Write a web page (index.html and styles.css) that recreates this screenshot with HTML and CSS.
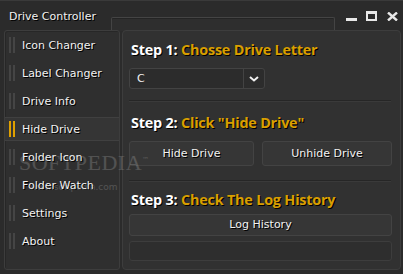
FILE: index.html
```html
<!DOCTYPE html>
<html>
<head>
    <meta name="viewport" content="width=device-width, initial-scale=1">
    <link rel="stylesheet" href="styles.css">
</head>
<body>
    <div class="window">
        <div class="titlebar">
            <span class="title">Drive Controller</span>
            <div class="title-tab"></div>
            <div class="controls">
                <span class="btn-min"></span>
                <span class="btn-max"></span>
                <svg class="btn-close" width="11" height="9" viewBox="0 0 11 9">
                    <path d="M1 0.5 L10 8.5 M10 0.5 L1 8.5" stroke="#e8e8e8" stroke-width="2.4"/>
                </svg>
            </div>
        </div>

        <div class="main">
            <div class="sidebar">
                <div class="item"><span class="bars"></span>Icon Changer</div>
                <div class="item"><span class="bars"></span>Label Changer</div>
                <div class="item"><span class="bars"></span>Drive Info</div>
                <div class="item active"><span class="bars"></span>Hide Drive</div>
                <div class="item"><span class="bars"></span>Folder Icon</div>
                <div class="item"><span class="bars"></span>Folder Watch</div>
                <div class="item"><span class="bars"></span>Settings</div>
                <div class="item"><span class="bars"></span>About</div>
            </div>

            <div class="content">
                <h3 class="step"><span class="num">Step 1:</span> Chosse Drive Letter</h3>
                <div class="select">
                    <span class="value">C</span>
                    <span class="arrow">
                        <svg width="10" height="6" viewBox="0 0 10 6">
                            <path d="M1 1 L5 4.5 L9 1" fill="none" stroke="#f0f0f0" stroke-width="2"/>
                        </svg>
                    </span>
                </div>
                <div class="sep"></div>

                <h3 class="step"><span class="num">Step 2:</span> Click "Hide Drive"</h3>
                <div class="btn-row">
                    <div class="button hide">Hide Drive</div>
                    <div class="button">Unhide Drive</div>
                </div>
                <div class="sep lower"></div>

                <h3 class="step"><span class="num">Step 3:</span> Check The Log History</h3>
                <div class="button wide">Log History</div>
                <div class="log-box"></div>
            </div>
        </div>

        <div class="watermark">
            <span class="wm-big">SOFTPEDIA<sup>™</sup></span>
            <span class="wm-small">www.softpedia.com</span>
        </div>
    </div>
</body>
</html>
```

FILE: styles.css
```css
body {
    margin: 0;
    padding: 0;
    background-color: #2b2b2b;
    font-family: "DejaVu Sans", Verdana, sans-serif;
    font-size: 11px;
    color: #f2f2f2;
}

.window {
    position: relative;
    width: 403px;
    height: 274px;
    box-sizing: border-box;
    border-top: 1px solid #3a3a3a;
    overflow: hidden;
}

/* Title bar */
.titlebar {
    height: 29px;
    display: flex;
    align-items: flex-start;
    padding: 0 5px 0 9px;
}

.title {
    margin-top: 9px;
    width: 102px;
    text-shadow: 1px 1px 0 #000;
}

.title-tab {
    margin-top: 16px;
    width: 222px;
    height: 13px;
    border: 1px solid #444;
    border-bottom: none;
    border-radius: 2px 2px 0 0;
    background-color: #2e2e2e;
    box-shadow: inset 0 1px 0 #242424;
}

.controls {
    margin-left: auto;
    margin-top: 10px;
    display: flex;
    align-items: flex-end;
    gap: 9px;
    height: 10px;
}

.btn-min {
    width: 11px;
    height: 3px;
    background-color: #e8e8e8;
}

.btn-max {
    width: 7px;
    height: 5px;
    border: 2px solid #e8e8e8;
    border-top-width: 3px;
}

.btn-close {
    display: block;
    margin-left: 1px;
}

/* Layout */
.main {
    display: flex;
    gap: 2px;
    padding: 0 2px 0 4px;
    height: 240px;
}

.sidebar {
    width: 114px;
    border: 1px solid #3d3d3d;
    border-radius: 3px;
    background-color: #2f2f2f;
    box-shadow: inset 1px 1px 0 #272727;
}

.item {
    height: 28px;
    display: flex;
    align-items: center;
    padding-left: 4px;
    text-shadow: 1px 1px 0 #000;
}

.bars {
    width: 6px;
    height: 16px;
    margin-right: 7px;
    border-left: 2px solid #454545;
    border-right: 2px solid #454545;
    box-sizing: border-box;
}

.item.active {
    height: 22px;
    margin: 2px 0;
    background-color: #353535;
    border-top: 1px solid #404040;
    border-bottom: 1px solid #404040;
}

.item.active .bars {
    border-color: #dfa000;
}

.content {
    flex: 1;
    border: 1px solid #3d3d3d;
    border-radius: 4px;
    background-color: #313131;
    padding: 9px 8px 0 6px;
    display: flex;
    flex-direction: column;
}

.step {
    margin: 0 0 0 2px;
    font-family: "Open Sans", "DejaVu Sans", sans-serif;
    font-weight: 700;
    font-size: 14.4px;
    line-height: 20px;
    color: #d99f00;
    text-shadow: 1px 1px 0 #000;
    letter-spacing: -0.2px;
}

.step .num {
    color: #ffffff;
}

.select {
    margin-top: 8px;
    width: 134px;
    height: 19px;
    display: flex;
    border: 1px solid #434343;
    border-radius: 3px;
    background-color: #2c2c2c;
}

.select .value {
    flex: 1;
    padding-left: 7px;
    line-height: 19px;
    border-right: 1px solid #434343;
}

.select .arrow {
    width: 20px;
    display: flex;
    align-items: center;
    justify-content: center;
}

.sep {
    height: 1px;
    margin: 11px 1px 11px 0;
    background-color: #262626;
    border-bottom: 1px solid #3a3a3a;
}

.sep.lower {
    margin: 14px 1px 8px 0;
}

.btn-row {
    display: flex;
    gap: 8px;
    margin-top: 8px;
}

.button {
    flex: 1;
    height: 23px;
    line-height: 23px;
    text-align: center;
    border: 1px solid #434343;
    border-radius: 3px;
    background-color: #363636;
    text-shadow: 1px 1px 0 #000;
}

.button.hide {
    flex: 0 0 123px;
}

.button.wide {
    flex: none;
    height: 20px;
    line-height: 20px;
    margin-top: 4px;
}

.log-box {
    margin-top: 5px;
    height: 18px;
    border: 1px solid #3d3d3d;
    border-radius: 3px;
    background-color: #2e2e2e;
}

/* Watermark over the content */
.watermark {
    position: absolute;
    left: 19px;
    top: 146px;
    display: flex;
    flex-direction: column;
    align-items: flex-end;
    pointer-events: none;
    opacity: 0.2;
}

.wm-big {
    font-family: "Liberation Serif", serif;
    font-size: 22px;
    letter-spacing: 0.5px;
    color: #e0e0e0;
    line-height: 26px;
}

.wm-big sup {
    font-family: "DejaVu Sans", sans-serif;
    font-size: 7px;
}

.wm-small {
    font-family: "DejaVu Sans", sans-serif;
    font-size: 9px;
    color: #e0e0e0;
    margin-top: 6px;
    margin-right: 32px;
}
```
